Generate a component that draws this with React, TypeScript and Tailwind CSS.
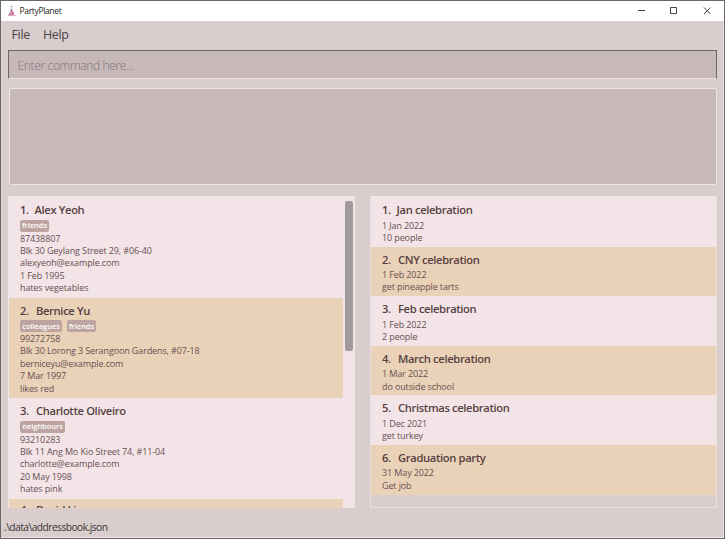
import React from "react";

type Person = { n: number; name: string; tags: { t: string; w: string }[]; lines: string[] };
type PartyEvent = { n: number; name: string; lines: string[] };

const people: Person[] = [
  {
    n: 1,
    name: "Alex Yeoh",
    tags: [{ t: "friends", w: "w-[29px]" }],
    lines: ["87438807", "Blk 30 Geylang Street 29, #06-40", "alexyeoh@example.com", "1 Feb 1995", "hates vegetables"],
  },
  {
    n: 2,
    name: "Bernice Yu",
    tags: [{ t: "colleagues", w: "w-[42px]" }, { t: "friends", w: "w-[29px]" }],
    lines: ["99272758", "Blk 30 Lorong 3 Serangoon Gardens, #07-18", "berniceyu@example.com", "7 Mar 1997", "likes red"],
  },
  {
    n: 3,
    name: "Charlotte Oliveiro",
    tags: [{ t: "neighbours", w: "w-[45px]" }],
    lines: ["93210283", "Blk 11 Ang Mo Kio Street 74, #11-04", "charlotte@example.com", "20 May 1998", "hates pink"],
  },
  { n: 4, name: "David Li", tags: [], lines: [] },
];

const events: PartyEvent[] = [
  { n: 1, name: "Jan celebration", lines: ["1 Jan 2022", "10 people"] },
  { n: 2, name: "CNY celebration", lines: ["1 Feb 2022", "get pineapple tarts"] },
  { n: 3, name: "Feb celebration", lines: ["1 Feb 2022", "2 people"] },
  { n: 4, name: "March celebration", lines: ["1 Mar 2022", "do outside school"] },
  { n: 5, name: "Christmas celebration", lines: ["1 Dec 2021", "get turkey"] },
  { n: 6, name: "Graduation party", lines: ["31 May 2022", "Get job"] },
];

function Heading({ n, name }: { n: number; name: string }) {
  return (
    <div className="flex h-[17px] items-center text-[11.2px] font-semibold tracking-[-0.35px] text-[#583f42]">
      <span className={n === 1 ? "w-[14.5px] shrink-0" : "w-[16px] shrink-0"}>{n}.</span>
      <span>{name}</span>
    </div>
  );
}

function Line({ text }: { text: string }) {
  return <div className="h-[12.4px] text-[9px] leading-[12.4px] tracking-[-0.12px] text-[#694f53]">{text}</div>;
}

function TitleBar() {
  return (
    <div className="flex h-[20px] shrink-0 items-center bg-white">
      <svg className="ml-[6px] h-[12px] w-[10px]" viewBox="0 0 10 12">
        <path d="M4.5 2 7.600 10H1.800Z" fill="#d5b3c6" />
        <path d="M4.400 3.500 5.400 5.500 3.600 7.500Z" fill="#8f7196" />
        <path d="M2.600 7.500 4.300 10H1.600Z" fill="#9a7ea6" />
        <circle cx="5.600" cy="8.200" r="1.200" fill="#e0557d" />
        <circle cx="4.400" cy="1.500" r="1" fill="#c3a8bd" />
        <path d="M1 10.500h7.500" stroke="#dba3b7" strokeWidth="1.200" />
      </svg>
      <span className="ml-[2.5px] pt-px text-[8.5px] tracking-[-0.34px] text-[#222]">PartyPlanet</span>
      <svg className="ml-auto h-[20px] w-[90px]" viewBox="0 0 90 20" fill="none" stroke="#444" strokeWidth="1">
        <path d="M4 9.500h7" />
        <path d="M36.500 6.500h6v6h-6z" />
        <path d="m70 6.500 6.500 6.500m0-6.500-6.500 6.500" />
      </svg>
    </div>
  );
}

export default function App() {
  return (
    <div className="flex h-[539px] w-[725px] flex-col overflow-hidden whitespace-nowrap border border-[#6c6668] bg-[#d9cdce] font-['Open_Sans','Noto_Sans',sans-serif]">
      <TitleBar />
      <div className="flex min-h-0 flex-1 flex-col border-r border-b border-[#eee4e5]">
        <div className="flex h-[29px] shrink-0 items-center gap-[13px] pl-[10.5px] text-[12.5px] tracking-[-0.35px] text-[#4b4547]">
          <span>File</span>
          <span>Help</span>
        </div>
        <div className="ml-[7px] flex h-[29px] w-[709px] shrink-0 items-center border border-[#6f6467] border-b-[#eee4e5] bg-[#c7b8b9] pt-[2px] pl-[8.5px] text-[12px] font-light tracking-[-0.34px] text-[#7f7376]">
          Enter command here...
        </div>
        <div className="mt-[9px] ml-[8px] h-[97px] w-[708px] shrink-0 rounded-[2px] border border-[#eee4e5] bg-[#c7b8b9]" />
        <div className="mt-[11px] ml-[7px] flex h-[312px] shrink-0 gap-[15px]">
          <div className="flex w-[347px] overflow-hidden border border-b-0 border-[#eee9e9] bg-[#f3e5e7]">
            <div className="w-[334px] shrink-0">
              {people.map((p) => (
                <div
                  key={p.n}
                  className={`h-[100.5px] pl-[11px] ${p.n === 4 ? "pt-[3px]" : "pt-[5px]"} ${p.n % 2 ? "bg-[#f3e5e7]" : "bg-[#e9d2b8]"}`}
                >
                  <Heading n={p.n} name={p.name} />
                  <div className="flex h-[13.5px] items-center gap-[5px]">
                    {p.tags.map((g) => (
                      <span key={g.t} className={`flex h-[12px] items-center justify-center rounded-[2px] bg-[#bda4a0] text-[7.5px] font-semibold tracking-[-0.05px] text-white ${g.w}`}>
                        {g.t}
                      </span>
                    ))}
                  </div>
                  {p.lines.map((l) => (
                    <Line key={l} text={l} />
                  ))}
                </div>
              ))}
            </div>
            <div className="flex flex-1 pt-[4px] pl-[2px]">
              <div className="h-[150px] w-[8px] rounded-[2px] bg-[#a29b9c]" />
            </div>
          </div>
          <div className="w-[347px] border border-[#e8dedf] border-t-[#eee9e9]">
            {events.map((e) => (
              <div key={e.n} className={`h-[49.6px] pt-[5px] pl-[11px] ${e.n % 2 ? "bg-[#f3e5e7]" : "bg-[#e9d2b8]"}`}>
                <Heading n={e.n} name={e.name} />
                <div className="pt-[0.5px]">
                  {e.lines.map((l) => (
                    <Line key={l} text={l} />
                  ))}
                </div>
              </div>
            ))}
          </div>
        </div>
        <div className="flex flex-1 items-center pt-[10px] pl-[3px] text-[10.2px] tracking-[-0.52px] text-[#3b3537]">.\data\addressbook.json</div>
      </div>
    </div>
  );
}
